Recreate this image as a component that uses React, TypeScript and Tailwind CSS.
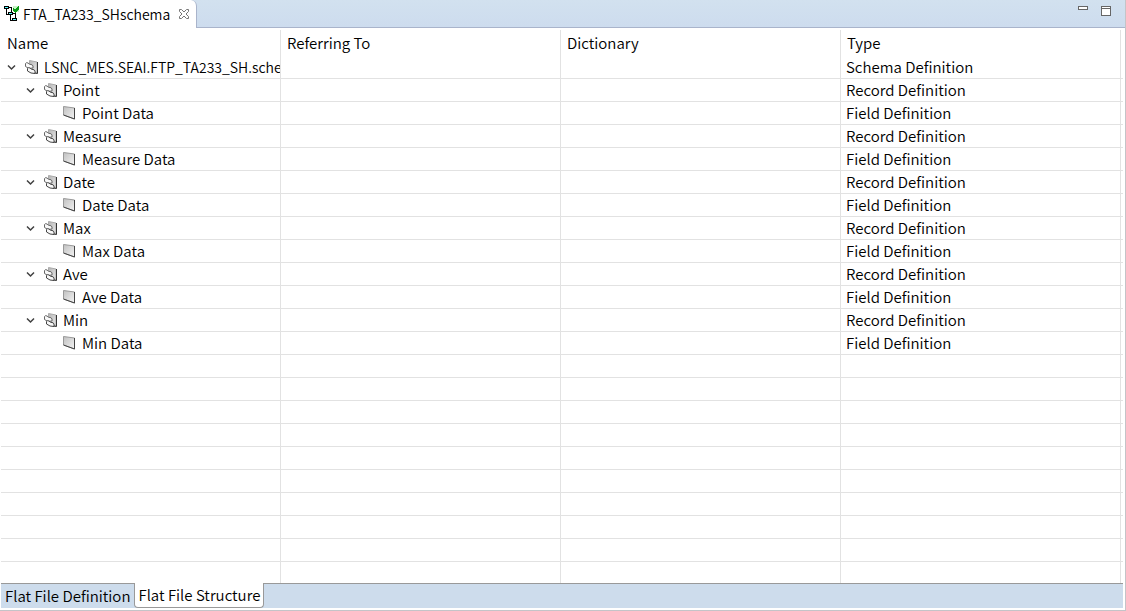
import { FC, ReactNode } from 'react';
import clsx from 'clsx';

type Kind = 'Schema' | 'Record' | 'Field';

interface Row {
  name: string;
  kind: Kind;
}

const groups = ['Point', 'Measure', 'Date', 'Max', 'Ave', 'Min'];

const rows: Row[] = [
  { name: 'LSNC_MES.SEAI.FTP_TA233_SH.sche', kind: 'Schema' },
  ...groups.flatMap((name): Row[] => [
    { name, kind: 'Record' },
    { name: `${name} Data`, kind: 'Field' },
  ]),
];

const columns = ['Name', 'Referring To', 'Dictionary', 'Type'];

const indent: Record<Kind, string> = {
  Schema: 'pl-[3px]',
  Record: 'pl-[22px]',
  Field: 'pl-[61px]',
};

const SchemaIcon: FC = () => (
  <svg className="h-4 w-4 shrink-0" viewBox="0 0 16 16" shapeRendering="crispEdges">
    <path d="M2.500 2v6.500H5M5 1.500h2.500V6M6.500 8v6.500H8M9 7.500h2.500V12" fill="none" stroke="#000" />
    <g fill="#5ff" stroke="#000">
      <path d="M.5.5h4v2h-4z" />
      <path d="M4.500 6.500h4v2h-4z" />
      <path d="M8.500 12.500h4v2h-4z" />
    </g>
    <path d="M9 0h6v6H9z" fill="#c8f5c8" />
    <path d="M9 2l2 2 3-4h1v3l-4 4-2-2z" fill="#0a9a14" />
  </svg>
);

const RecordIcon: FC = () => (
  <svg className="h-4 w-4 shrink-0" viewBox="0 0 16 16">
    <defs>
      <linearGradient id="page" x1="0" y1="0" x2="1" y2="1">
        <stop offset="0" stopColor="#b4b4b4" />
        <stop offset="1" stopColor="#ececec" />
      </linearGradient>
    </defs>
    <path d="M5.500 1.500l7.500 1.500v11l-7.500-2z" fill="url(#page)" stroke="#aaa" />
    <path d="M13.500 3v11.500l-3-.5" fill="none" stroke="#333" />
    <path d="M1.500 4.500q1-1.500 2.500-.5l1.500 1.200q3.500.3 3.500 1.800v2l-4 .5-3.500-2z" fill="#f8f8f8" stroke="#666" />
    <path d="M3.500 9.500q1-1.500 2.500-.5l1.500 1.200q3.500.3 3.500 1.800v2.500l-4-.5-3.500-2z" fill="#f8f8f8" stroke="#444" />
  </svg>
);

const FieldIcon: FC = () => (
  <svg className="h-4 w-4 shrink-0" viewBox="0 0 16 16">
    <defs>
      <linearGradient id="field" x1="0" y1="0" x2="1" y2="1">
        <stop offset="0" stopColor="#c0c0c0" />
        <stop offset="1" stopColor="#f4f4f4" />
      </linearGradient>
    </defs>
    <path d="M1.500 1.500l11 1.500v11l-11-4z" fill="url(#field)" stroke="#999" />
    <path d="M12.500 3v11l-11-4" fill="none" stroke="#444" />
  </svg>
);

const Chevron: FC = () => (
  <svg className="h-4 w-4" viewBox="0 0 16 16">
    <path d="M4 6.500l3.500 3.500L11 6.500" fill="none" stroke="#404040" strokeWidth="1.500" />
  </svg>
);

const Cell: FC<{ children?: ReactNode; className?: string }> = ({ children, className }) => (
  <td className={clsx('h-[23px] overflow-hidden border-r border-b border-[#e2e2e2] p-0 whitespace-nowrap', className)}>
    {children}
  </td>
);

const TreeRow: FC<{ row: Row }> = ({ row }) => (
  <tr>
    <Cell>
      <div className={clsx('flex h-[22px] items-center', indent[row.kind])}>
        {row.kind !== 'Field' && (
          <button type="button" aria-label={`Collapse ${row.name}`} className="mr-1 w-4 shrink-0">
            <Chevron />
          </button>
        )}
        {row.kind === 'Field' ? <FieldIcon /> : <RecordIcon />}
        <span className={clsx('ml-1', row.kind === 'Schema' && 'text-sm')}>{row.name}</span>
      </div>
    </Cell>
    <Cell />
    <Cell />
    <Cell className="pl-[5px]">{row.kind} Definition</Cell>
    <Cell className="border-r-0" />
  </tr>
);

export default function App() {
  return (
    <div className="flex h-screen flex-col overflow-hidden border-r border-b border-[#c4c4c8] bg-white font-['Noto_Sans_CJK_KR',sans-serif] text-[15px] leading-[22px] font-[350] text-black">
      <header className="flex h-7 shrink-0 justify-between border-b border-[#a9b4cb] bg-linear-to-b from-[#d2e1ef] to-[#cddcee]">
        <div className="flex h-7 items-center rounded-tr-md border-r border-[#a9b4cb] bg-white pr-[6px] pl-1">
          <SchemaIcon />
          <span className="ml-[3px] text-sm">FTA_TA233_SHschema</span>
          <button type="button" aria-label="Close" className="ml-2">
            <svg className="h-3 w-3" viewBox="0 0 12 12">
              <path
                d="M1.500 1.500h2L6 4l2.500-2.500h2v2L8 6l2.500 2.500v2h-2L6 8l-2.500 2.500h-2v-2L4 6 1.500 3.500z"
                fill="#fff"
                stroke="#777"
              />
            </svg>
          </button>
        </div>
        <div className="flex gap-[13px] pt-[6px] pr-[14px]">
          <button type="button" aria-label="Minimize" className="h-1 w-[10px] border border-[#666] bg-white" />
          <button
            type="button"
            aria-label="Maximize"
            className="flex h-[10px] w-[10px] items-start border border-[#666] bg-white"
          >
            <span className="h-[2px] w-full border-b border-[#666]" />
          </button>
        </div>
      </header>

      <main className="min-h-0 flex-1 overflow-hidden pt-[2px] pr-[2px] pl-px">
        <table className="w-full table-fixed border-separate border-spacing-0">
          <colgroup>
            <col className="w-[280px]" />
            <col className="w-[280px]" />
            <col className="w-[280px]" />
            <col className="w-[280px]" />
            <col />
          </colgroup>
          <thead>
            <tr>
              {columns.map((column) => (
                <th key={column} className="h-[26px] border-r border-[#e2e2e2] p-0 pl-[6px] text-left font-[350]">
                  {column}
                </th>
              ))}
              <td />
            </tr>
          </thead>
          <tbody>
            {rows.map((row) => (
              <TreeRow key={row.name} row={row} />
            ))}
            {Array.from({ length: 10 }, (_, i) => (
              <tr key={i}>
                <Cell />
                <Cell />
                <Cell />
                <Cell />
                <Cell className="border-r-0" />
              </tr>
            ))}
          </tbody>
        </table>
      </main>

      <nav className="mr-[2px] mb-[2px] ml-px flex h-[25px] shrink-0 border-t border-[#999] bg-[#cddcec]">
        <button type="button" className="px-1 whitespace-nowrap">
          Flat File Definition
        </button>
        <button
          type="button"
          className="-mt-px rounded-b-sm border-x border-b border-[#999] bg-white px-[3px] whitespace-nowrap"
        >
          Flat File Structure
        </button>
      </nav>
    </div>
  );
}
